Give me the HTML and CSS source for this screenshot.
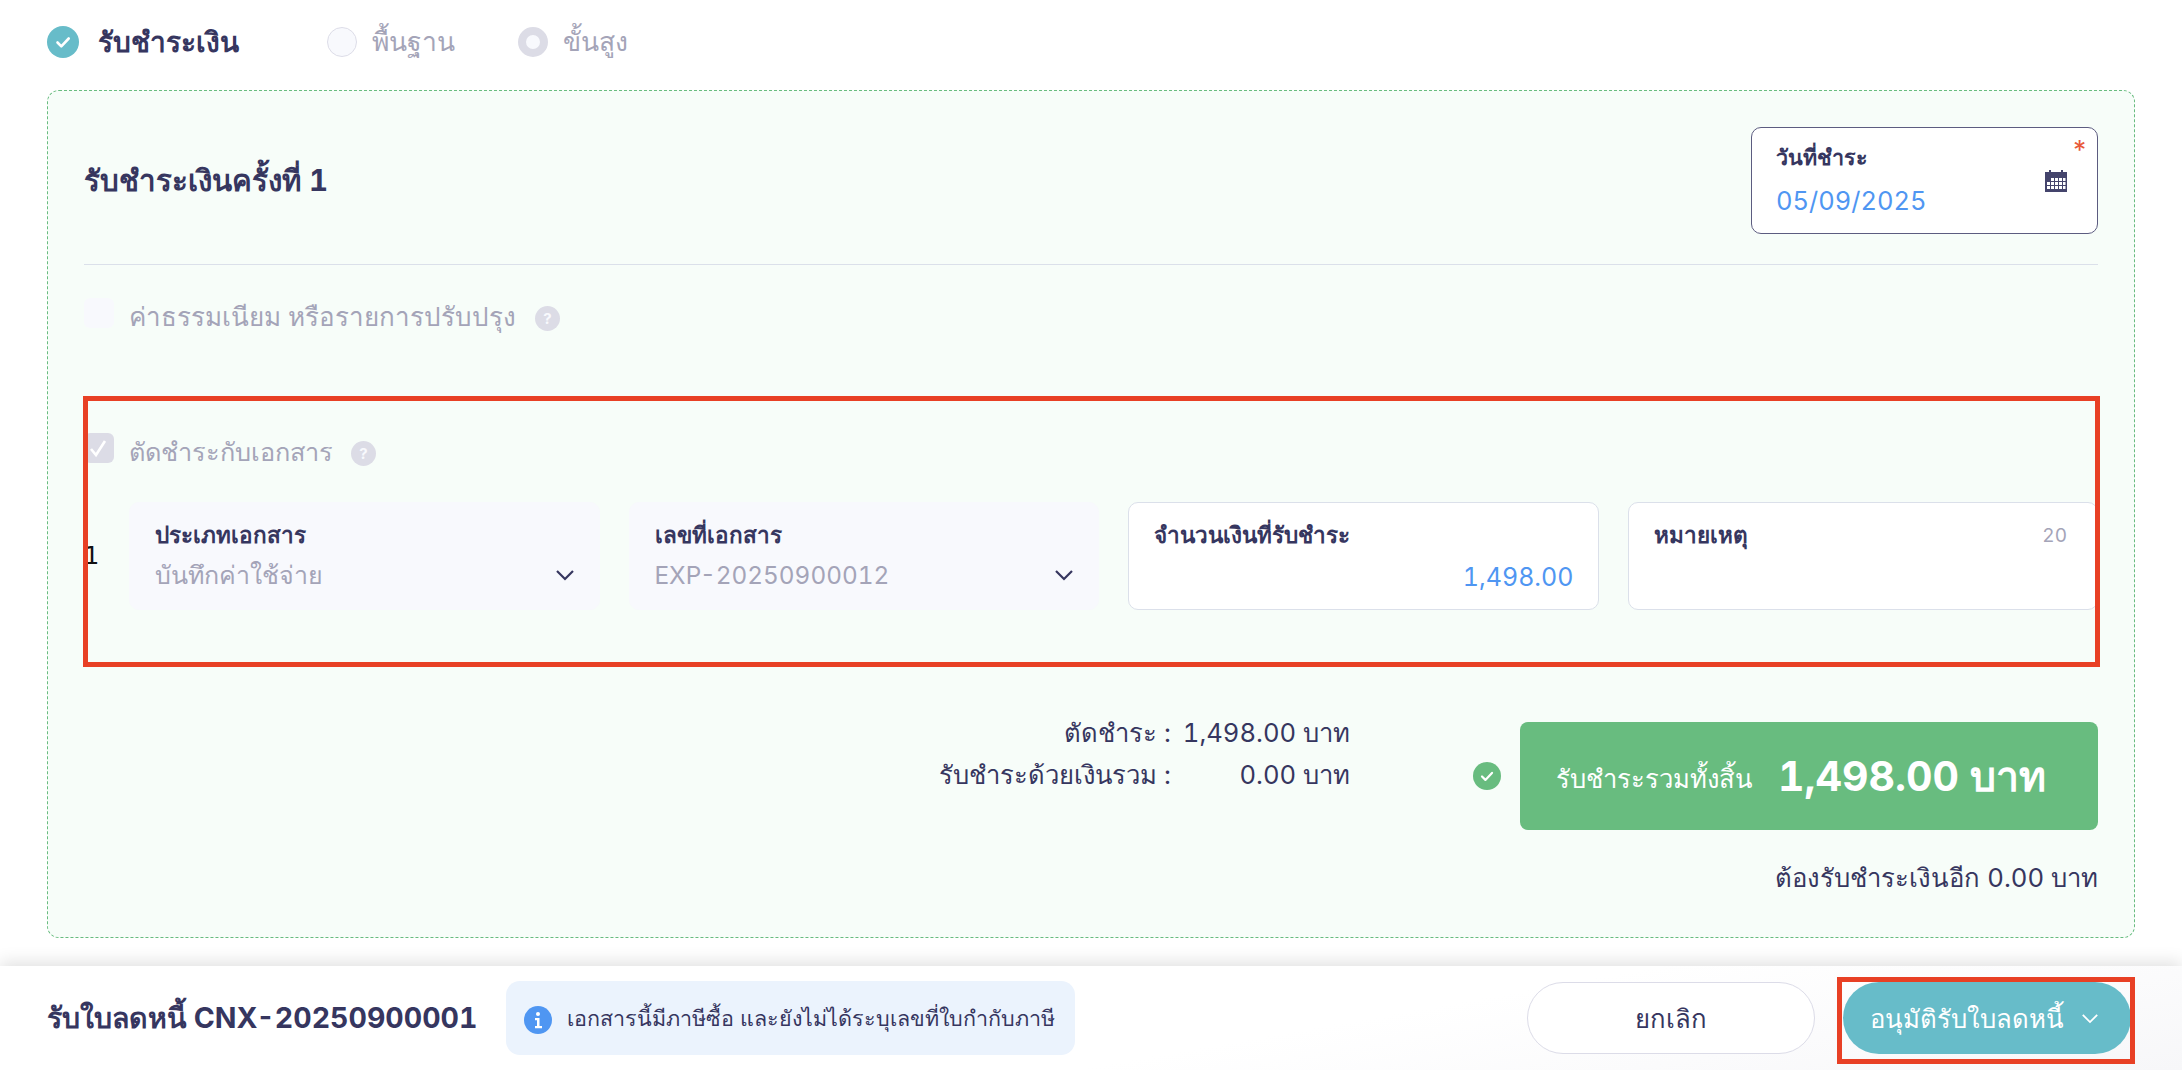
FILE: index.html
```html
<!DOCTYPE html>
<html lang="th">
<head>
<meta charset="utf-8">
<title>รับใบลดหนี้</title>
<link rel="stylesheet" href="styles.css">
</head>
<body>
<div class="page">
  <main class="main">
    <div class="steps">
      <div class="step">
        <svg class="step-check" viewBox="0 0 32 32"><circle cx="16" cy="16" r="16" fill="#67bcc9"/><path d="M10.5 16.5l3.8 3.8 7.4-7.8" fill="none" stroke="#fff" stroke-width="2.6" stroke-linecap="round" stroke-linejoin="round"/></svg>
        <span class="step-title">รับชำระเงิน</span>
      </div>
      <div class="step step-plain">
        <span class="radio"></span>
        <span class="step-label">พื้นฐาน</span>
      </div>
      <div class="step step-plain">
        <span class="radio radio-on"></span>
        <span class="step-label">ขั้นสูง</span>
      </div>
    </div>

    <section class="panel">
      <header class="panel-head">
        <h2 class="panel-title">รับชำระเงินครั้งที่ 1</h2>
        <div class="date-field">
          <div class="date-text">
            <div class="date-label">วันที่ชำระ</div>
            <div class="date-value">05/09/2025</div>
          </div>
          <svg class="calendar" viewBox="0 0 22 22"><path d="M4 0h2v2h10V0h2v2h4v20H0V2h4z" fill="#44446c"/><g fill="#fff"><rect x="6" y="8" width="3" height="3"/><rect x="10" y="8" width="3" height="3"/><rect x="14" y="8" width="3" height="3"/><rect x="18" y="8" width="2.5" height="3"/><rect x="2" y="12" width="3" height="3"/><rect x="6" y="12" width="3" height="3"/><rect x="10" y="12" width="3" height="3"/><rect x="14" y="12" width="3" height="3"/><rect x="18" y="12" width="2.5" height="3"/><rect x="2" y="16" width="3" height="3"/><rect x="6" y="16" width="3" height="3"/><rect x="10" y="16" width="3" height="3"/><rect x="14" y="16" width="3" height="3"/><rect x="18" y="16" width="2.5" height="3"/></g></svg>
          <span class="required">*</span>
        </div>
      </header>

      <div class="option option-fee">
        <span class="checkbox"></span>
        <span class="option-label">ค่าธรรมเนียม หรือรายการปรับปรุง</span>
        <span class="help">?</span>
      </div>

      <div class="option option-cut">
        <span class="checkbox checkbox-on">
          <svg viewBox="0 0 30 30"><path d="M7 16l5 6 9-14" fill="none" stroke="#fff" stroke-width="2.6"/></svg>
        </span>
        <span class="option-label option-label-cut">ตัดชำระกับเอกสาร</span>
        <span class="help help-tight">?</span>
      </div>

      <div class="doc-row">
        <div class="doc-index">1</div>
        <div class="field field-disabled">
          <div class="field-label">ประเภทเอกสาร</div>
          <div class="select-line">
            <span class="field-muted">บันทึกค่าใช้จ่าย</span>
            <svg class="chev" viewBox="0 0 20 12"><path d="M2 2l8 8 8-8" fill="none" stroke="#36365f" stroke-width="2.2"/></svg>
          </div>
        </div>
        <div class="field field-disabled">
          <div class="field-label">เลขที่เอกสาร</div>
          <div class="select-line">
            <span class="field-muted field-code">EXP-20250900012</span>
            <svg class="chev" viewBox="0 0 20 12"><path d="M2 2l8 8 8-8" fill="none" stroke="#36365f" stroke-width="2.2"/></svg>
          </div>
        </div>
        <div class="field">
          <div class="field-label">จำนวนเงินที่รับชำระ</div>
          <div class="amount">1,498.00</div>
        </div>
        <div class="field">
          <div class="note-line">
            <span class="field-label">หมายเหตุ</span>
            <span class="counter">20</span>
          </div>
        </div>
      </div>

      <div class="summary">
        <div class="summary-lines">
          <div class="summary-line"><span>ตัดชำระ :</span><span class="summary-val">1,498.00 บาท</span></div>
          <div class="summary-line"><span>รับชำระด้วยเงินรวม :</span><span class="summary-val">0.00 บาท</span></div>
        </div>
        <svg class="ok" viewBox="0 0 28 28"><circle cx="14" cy="14" r="14" fill="#68bc7f"/><path d="M9 14.5l3.4 3.4 6.6-7" fill="none" stroke="#fff" stroke-width="2.2" stroke-linecap="round" stroke-linejoin="round"/></svg>
        <div class="total">
          <span class="total-label">รับชำระรวมทั้งสิ้น</span>
          <span class="total-value">1,498.00 บาท</span>
        </div>
      </div>
      <div class="remain">ต้องรับชำระเงินอีก 0.00 บาท</div>
    </section>
  </main>

  <footer class="footer">
    <div class="doc-title">รับใบลดหนี้ CNX-20250900001</div>
    <div class="notice">
      <svg class="info" viewBox="0 0 28 28"><circle cx="14" cy="14" r="14" fill="#4f96f2"/><circle cx="14" cy="8" r="2" fill="#fff"/><path d="M11 12h4.500v8H18v2.200h-7V20h2v-5.800h-2z" fill="#fff"/></svg>
      <span class="notice-text">เอกสารนี้มีภาษีซื้อ และยังไม่ได้ระบุเลขที่ใบกำกับภาษี</span>
    </div>
    <div class="actions">
      <button class="btn btn-cancel" type="button">ยกเลิก</button>
      <button class="btn btn-approve" type="button">
        <span>อนุมัติรับใบลดหนี้</span>
        <svg class="chev-white" viewBox="0 0 20 12"><path d="M2 2l8 8 8-8" fill="none" stroke="#fff" stroke-width="2"/></svg>
      </button>
    </div>
  </footer>

  <div class="mark mark-docs"></div>
  <div class="mark mark-approve"></div>
</div>
</body>
</html>
```
FILE: styles.css
```css
* { box-sizing: border-box; }
html, body { margin: 0; padding: 0; }
body {
  width: 2182px;
  height: 1070px;
  overflow: hidden;
  background: #fff;
  font-family: "Inter", "Noto Sans", sans-serif;
  font-feature-settings: "tnum";
  color: #36365f;
}
.page { position: relative; height: 1070px; display: flex; flex-direction: column; }
.main { flex: 0 0 966px; padding: 0 47px; }

.steps { display: flex; align-items: center; height: 90px; padding-bottom: 6px; }
.step { display: flex; align-items: center; }
.step-check { width: 32px; height: 32px; margin-right: 19px; }
.step-title { font-size: 28px; font-weight: 700; color: #36365f; margin-right: 88px; }
.step-plain { margin-right: 63px; }
.radio { width: 30px; height: 30px; border-radius: 50%; background: #f8f9fd; border: 1px solid #dddde8; margin-right: 15px; }
.radio-on { background: #f8f9fd; border: 8px solid #dcdce6; }
.step-label { font-size: 26.500px; color: #a4a4b8; }

.panel {
  height: 848px;
  background: #f7fdf9;
  border: 1px dashed #68bc7f;
  border-radius: 12px;
  padding: 0 36px;
}
.panel-head {
  display: flex;
  align-items: center;
  justify-content: space-between;
  height: 174px;
  padding-top: 36px;
  padding-bottom: 30px;
  border-bottom: 1px solid #dbe0ea;
}
.panel-title { margin: 0; font-size: 29.500px; font-weight: 700; color: #36365f; }
.date-field {
  position: relative;
  width: 347px;
  height: 107px;
  background: #fff;
  border: 1px solid #5c5c80;
  border-radius: 10px;
  padding: 0 30px 0 24px;
  display: flex;
  align-items: center;
  justify-content: space-between;
}
.date-label { font-size: 21.500px; font-weight: 600; color: #36365f; line-height: 34px; margin-top: -2px; }
.date-value { font-size: 25.500px; color: #4f96f2; margin-top: 8px; line-height: 38px; }
.field-label { font-size: 22.500px; font-weight: 600; color: #36365f; line-height: 34px; }
.calendar { width: 22px; height: 22px; }
.required { position: absolute; top: 8px; right: 9px; font-size: 26px; line-height: 28px; color: #e8593a; }

.option { display: flex; align-items: center; height: 30px; }
.option-fee { margin-top: 33px; }
.option-cut { margin-top: 105px; }
.checkbox { width: 30px; height: 30px; border-radius: 6px; background: #f8f9fd; margin-right: 15px; }
.checkbox-on { background: #dcdce6; display: block; }
.checkbox-on svg { display: block; width: 30px; height: 30px; }
.option-label { font-size: 26px; color: #a4a4b8; margin-top: 6px; }
.option-label-cut { font-size: 25.300px; margin-top: 7px; }
.help {
  width: 25px; height: 25px; margin-left: 19px; margin-top: 10px;
  border-radius: 50%; background: #dcdce6; color: #f8f9fd;
  font-size: 15px; font-weight: 700; line-height: 25px; text-align: center;
}
.help-tight { margin-left: 18px; }

.doc-row { display: flex; align-items: center; margin-top: 39px; gap: 29px; }
.doc-index { flex: 0 0 16px; font-family: "DejaVu Sans", sans-serif; font-size: 24px; color: #111; }
.field {
  flex: 1 1 0; height: 108px;
  background: #fff; border: 1px solid #dbe0ea; border-radius: 10px;
  padding: 15px 24px 0 25px;
}
.field-disabled { background: #f8f9fd; border-color: #f8f9fd; }
.select-line { display: flex; align-items: center; justify-content: space-between; margin-top: 4px; }
.field-muted { font-size: 25px; line-height: 38px; color: #a4a4b8; }
.field-code { font-size: 24.300px; }
.chev { width: 20px; height: 12px; }
.amount { font-size: 25px; color: #4f96f2; text-align: right; margin-top: 6px; line-height: 38px; }
.note-line { display: flex; justify-content: space-between; align-items: center; padding-right: 6px; }
.counter { font-size: 19px; color: #a4a4b8; }

.summary { display: flex; align-items: center; justify-content: flex-end; margin-top: 112px; }
.summary-lines { display: flex; flex-direction: column; gap: 4px; margin-right: 123px; margin-top: -8px; align-self: flex-start; }
.summary-line { display: flex; justify-content: flex-end; font-size: 25.600px; line-height: 38px; height: 38px; color: #36365f; }
.summary-val { width: 179px; text-align: right; }
.ok { width: 28px; height: 28px; margin-right: 19px; }
.total {
  width: 578px; height: 108px;
  background: #68bc7f; border-radius: 8px; color: #fff;
  display: flex; align-items: center; padding-left: 36px;
}
.total-label { font-size: 25.600px; margin-right: 26px; margin-top: 6px; }
.total-value { font-size: 41px; font-weight: 700; }
.remain { text-align: right; font-size: 25.700px; margin-top: 27px; color: #36365f; }

.footer {
  flex: 1;
  display: flex;
  align-items: center;
  padding: 0 47px;
  background: linear-gradient(170deg, #fff 60%, #f7f7f9 100%);
  box-shadow: 0 -4px 16px rgba(0, 0, 0, .12);
  position: relative;
}
.doc-title { font-size: 28.500px; font-weight: 700; margin-right: 29px; color: #36365f; white-space: nowrap; }
.notice {
  width: 569px; height: 74px; padding-left: 18px;
  background: #ebf3fd; border-radius: 14px;
  display: flex; align-items: center; font-size: 21.500px; color: #36365f;
}
.notice-text { white-space: nowrap; }
.info { width: 28px; height: 28px; margin-right: 15px; margin-top: 4px; flex: none; }
.actions { margin-left: auto; margin-right: 4px; display: flex; gap: 28px; }
.btn {
  height: 72px; border-radius: 36px; font-family: inherit; font-size: 25.700px; cursor: pointer;
  display: flex; align-items: center; justify-content: center;
}
.btn-cancel { width: 288px; background: #fff; border: 1px solid #dcdce8; color: #36365f; }
.btn-approve { width: 288px; background: #67bcc9; border: 0; color: #fff; padding: 0 32px 0 27px; justify-content: space-between; }
.chev-white { width: 18px; height: 11px; }

.mark { position: absolute; border-style: solid; border-color: #e84025; pointer-events: none; }
.mark-docs { left: 83px; top: 396px; width: 2017px; height: 271px; border-width: 5px; }
.mark-approve { left: 1837px; top: 977px; width: 298px; height: 87px; border-width: 5px; }
```
